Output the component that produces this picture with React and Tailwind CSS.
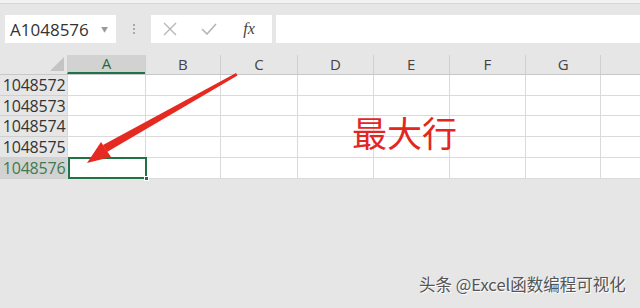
import React from "react";

const cols = [
  { l: "A", w: 78 },
  { l: "B", w: 76 },
  { l: "C", w: 78 },
  { l: "D", w: 76 },
  { l: "E", w: 77 },
  { l: "F", w: 77 },
  { l: "G", w: 76 },
  { l: "", w: 40 },
];
const rows = [
  { n: "1048572", h: 21 },
  { n: "1048573", h: 20 },
  { n: "1048574", h: 21 },
  { n: "1048575", h: 21 },
  { n: "1048576", h: 21, sel: true },
];

export default function App() {
  return (
    <div
      className="relative w-[640px] h-[308px] overflow-hidden bg-[#e6e6e6] text-[#333]"
      style={{ fontFamily: '"Open Sans", "Noto Sans", "Noto Sans CJK SC", sans-serif' }}
    >
      <div className="h-[4px] bg-[#f2f2f2] border-b border-[#d6d6d6]" />
      <div className="h-[51px] flex items-start pt-[11px] pl-[5px]">
        <div className="w-[111px] h-[28px] bg-white flex items-center justify-between pl-[5px] pr-[8px]">
          <span className="text-[17px] leading-none text-[#333]">A1048576</span>
          <span className="text-[7px] text-[#999] leading-none">▼</span>
        </div>
        <div className="w-[35px] h-[28px] flex flex-col items-center justify-center gap-[2px]">
          <span className="w-[2px] h-[2px] bg-[#aaa]" />
          <span className="w-[2px] h-[2px] bg-[#aaa]" />
          <span className="w-[2px] h-[2px] bg-[#aaa]" />
        </div>
        <div className="w-[121px] h-[28px] bg-white flex items-center">
          <div className="w-[38px] flex justify-center">
            <svg width="14" height="14" viewBox="0 0 14 14">
              <path d="M1 1 L13 13 M13 1 L1 13" stroke="#b5b5b5" strokeWidth="1.3" />
            </svg>
          </div>
          <div className="w-[40px] flex justify-center">
            <svg width="16" height="12" viewBox="0 0 16 12">
              <path d="M1 6 L6 11 L15 1" stroke="#b5b5b5" strokeWidth="1.6" fill="none" />
            </svg>
          </div>
          <div className="w-[40px] flex justify-center">
            <span
              className="text-[16px] italic text-[#444] leading-none"
              style={{ fontFamily: '"Liberation Serif", serif' }}
            >
              fx
            </span>
          </div>
        </div>
        <div className="ml-[4px] flex-1 h-[28px] bg-white" />
      </div>
      <div className="flex flex-col">
        <div className="flex h-[20px] border-b border-[#c8c8c8]">
          <div className="w-[68px] h-full relative bg-[#e6e6e6]">
            <svg className="absolute right-[3px] bottom-[3px]" width="14" height="14" viewBox="0 0 14 14">
              <polygon points="14,0 14,14 0,14" fill="#c4c4c4" />
            </svg>
          </div>
          {cols.map((c, i) => (
            <div
              key={i}
              style={{ width: c.w }}
              className={
                "h-full flex items-center justify-center text-[15px] border-l border-[#cfcfcf] " +
                (i === 0
                  ? "bg-[#d2d2d2] text-[#1e6b40] border-b-2 border-b-[#217346]"
                  : "bg-[#e6e6e6] text-[#444]")
              }
            >
              {c.l}
            </div>
          ))}
        </div>
        {rows.map((r, ri) => (
          <div key={ri} className="flex" style={{ height: r.h }}>
            <div
              className={
                "w-[68px] h-full flex items-center justify-end pr-[2px] text-[16px] tracking-[-0.2px] border-b border-[#d0d0d0] " +
                (r.sel ? "bg-[#d2d2d2] text-[#3d7a55]" : "bg-[#e6e6e6] text-[#333]")
              }
            >
              {r.n}
            </div>
            {cols.map((c, i) => (
              <div
                key={i}
                style={{ width: c.w }}
                className="h-full bg-white border-l border-b border-[#dadada]"
              />
            ))}
          </div>
        ))}
      </div>

      <div className="absolute left-[68px] top-[157px] w-[79px] h-[22px] border-2 border-[#217346]">
        <div className="absolute right-[-4px] bottom-[-4px] w-[5px] h-[5px] bg-[#217346] border border-white" />
      </div>

      <svg className="absolute left-0 top-0" width="640" height="308" viewBox="0 0 640 308">
        <polygon points="236,73 237.5,75.5 107,152 103,145" fill="#e52a22" />
        <polygon points="87,163 111,157 101,142" fill="#e52a22" />
      </svg>

      <div
        className="absolute left-[352px] top-[114px] text-[35px] leading-none text-[#e3261f]"
        style={{ fontFamily: '"Noto Sans CJK SC", sans-serif' }}
      >
        最大行
      </div>

      <div
        className="absolute left-[419px] top-[276px] text-[16.5px] leading-none text-[#555]"
        style={{
          fontFamily: '"Noto Sans CJK SC", sans-serif',
          textShadow: "1px 1px 0 #fff",
        }}
      >
        头条 @Excel函数编程可视化
      </div>
    </div>
  );
}
